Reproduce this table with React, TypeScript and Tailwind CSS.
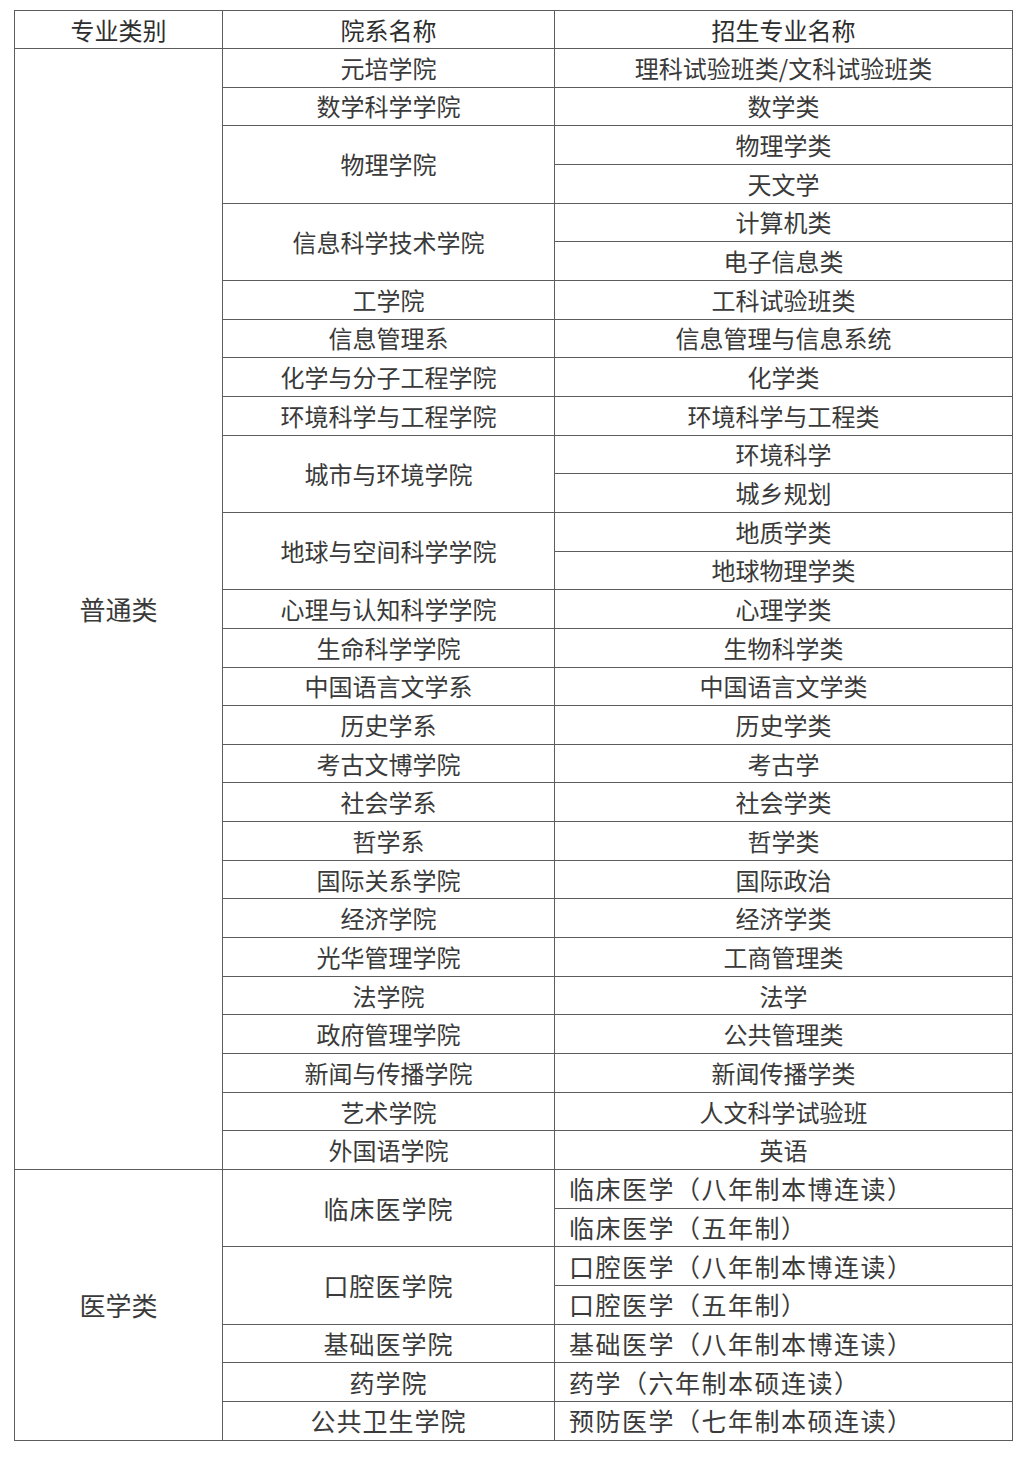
import React from "react";

type Dept = { name: string; majors: string[] };

const general: Dept[] = [
  { name: "元培学院", majors: ["理科试验班类/文科试验班类"] },
  { name: "数学科学学院", majors: ["数学类"] },
  { name: "物理学院", majors: ["物理学类", "天文学"] },
  { name: "信息科学技术学院", majors: ["计算机类", "电子信息类"] },
  { name: "工学院", majors: ["工科试验班类"] },
  { name: "信息管理系", majors: ["信息管理与信息系统"] },
  { name: "化学与分子工程学院", majors: ["化学类"] },
  { name: "环境科学与工程学院", majors: ["环境科学与工程类"] },
  { name: "城市与环境学院", majors: ["环境科学", "城乡规划"] },
  { name: "地球与空间科学学院", majors: ["地质学类", "地球物理学类"] },
  { name: "心理与认知科学学院", majors: ["心理学类"] },
  { name: "生命科学学院", majors: ["生物科学类"] },
  { name: "中国语言文学系", majors: ["中国语言文学类"] },
  { name: "历史学系", majors: ["历史学类"] },
  { name: "考古文博学院", majors: ["考古学"] },
  { name: "社会学系", majors: ["社会学类"] },
  { name: "哲学系", majors: ["哲学类"] },
  { name: "国际关系学院", majors: ["国际政治"] },
  { name: "经济学院", majors: ["经济学类"] },
  { name: "光华管理学院", majors: ["工商管理类"] },
  { name: "法学院", majors: ["法学"] },
  { name: "政府管理学院", majors: ["公共管理类"] },
  { name: "新闻与传播学院", majors: ["新闻传播学类"] },
  { name: "艺术学院", majors: ["人文科学试验班"] },
  { name: "外国语学院", majors: ["英语"] },
];

const medical: Dept[] = [
  { name: "临床医学院", majors: ["临床医学（八年制本博连读）", "临床医学（五年制）"] },
  { name: "口腔医学院", majors: ["口腔医学（八年制本博连读）", "口腔医学（五年制）"] },
  { name: "基础医学院", majors: ["基础医学（八年制本博连读）"] },
  { name: "药学院", majors: ["药学（六年制本硕连读）"] },
  { name: "公共卫生学院", majors: ["预防医学（七年制本硕连读）"] },
];

const groups = [
  { title: "普通类", depts: general, medical: false },
  { title: "医学类", depts: medical, medical: true },
];

const cell = "border border-[#5c5c5c] p-0 h-[38.67px] leading-none align-middle";

export default function App() {
  return (
    <div
      className="min-h-[1464px] bg-white pt-[10px] pl-[14px] text-[#3a3a3a]"
      style={{ fontFamily: '"Noto Sans CJK SC", "Noto Sans", sans-serif' }}
    >
      <table className="w-[998px] border-collapse table-fixed text-[24px]">
        <colgroup>
          <col className="w-[208px]" />
          <col className="w-[332px]" />
          <col className="w-[458px]" />
        </colgroup>
        <thead>
          <tr>
            <th className={`${cell} h-[38px] font-normal text-center text-[#2e2e2e]`}>专业类别</th>
            <th className={`${cell} h-[38px] font-normal text-center text-[#2e2e2e]`}>院系名称</th>
            <th className={`${cell} h-[38px] font-normal text-center text-[#2e2e2e]`}>招生专业名称</th>
          </tr>
        </thead>
        <tbody>
          {groups.map((g) => {
            const total = g.depts.reduce((n, d) => n + d.majors.length, 0);
            return g.depts.map((d, di) =>
              d.majors.map((m, mi) => (
                <tr key={`${g.title}-${d.name}-${m}`}>
                  {di === 0 && mi === 0 && (
                    <td rowSpan={total} className={`${cell} text-center text-[26px]`}>
                      {g.title}
                    </td>
                  )}
                  {mi === 0 && (
                    <td
                      rowSpan={d.majors.length}
                      className={`${cell} text-center ${g.medical ? "text-[25px] tracking-[1px]" : ""}`}
                    >
                      {d.name}
                    </td>
                  )}
                  <td
                    className={`${cell} ${
                      g.medical ? "text-left pl-[14px] text-[25px] tracking-[1.5px]" : "text-center"
                    }`}
                  >
                    {m}
                  </td>
                </tr>
              ))
            );
          })}
        </tbody>
      </table>
    </div>
  );
}
